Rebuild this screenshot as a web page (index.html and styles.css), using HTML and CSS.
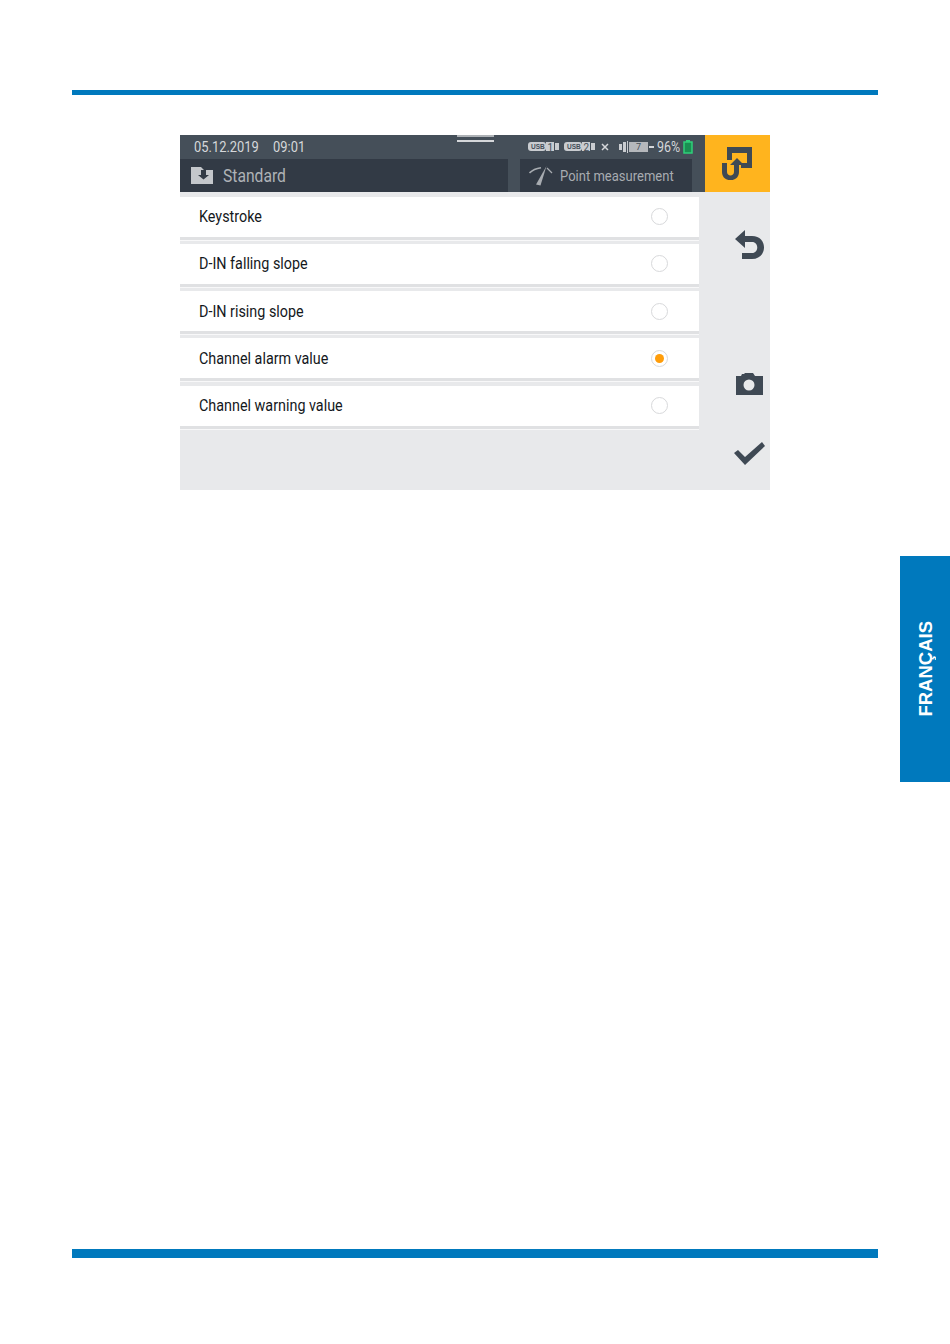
FILE: index.html
```html
<!DOCTYPE html>
<html lang="en">

<head>
    <meta charset="UTF-8">
    <meta name="viewport" content="width=device-width, initial-scale=1.0">
    <title>Trigger source</title>
    <link rel="stylesheet" href="styles.css">
</head>

<body>

    <div class="page">
        <div class="rule rule-top"></div>

        <div class="screen">
            <div class="topbar">
                <div class="topbar-main">
                    <div class="status">
                        <span class="datetime"><span>05.12.2019</span><span>09:01</span></span>
                        <span class="handle"></span>
                        <div class="tray">
                            <svg class="usb" width="32" height="12" viewBox="0 0 32 12">
                                <rect x="0" y="1" width="18" height="9" rx="3" fill="#c9ccd0"/>
                                <rect x="18" y="1" width="8" height="9" fill="#c9ccd0"/>
                                <rect x="27" y="2" width="4" height="7" fill="#c9ccd0"/>
                                <text x="3" y="8.200" class="usb-label">USB</text>
                                <text x="19.500" y="9.500" class="usb-num">1</text>
                            </svg>
                            <svg class="usb" width="32" height="12" viewBox="0 0 32 12">
                                <rect x="0" y="1" width="18" height="9" rx="3" fill="#c9ccd0"/>
                                <rect x="18" y="1" width="8" height="9" fill="#c9ccd0"/>
                                <rect x="27" y="2" width="4" height="7" fill="#c9ccd0"/>
                                <text x="3" y="8.200" class="usb-label">USB</text>
                                <text x="19.500" y="9.500" class="usb-num">2</text>
                            </svg>
                            <svg class="cross" width="8" height="8" viewBox="0 0 8 8">
                                <path d="M1 1L7 7M7 1L1 7" stroke="#d5d7da" stroke-width="1.500"/>
                            </svg>
                            <svg class="card" width="35" height="12" viewBox="0 0 35 12">
                                <rect x="0" y="3" width="3" height="6" fill="#c9ccd0"/>
                                <rect x="4" y="1" width="3" height="10" fill="#c9ccd0"/>
                                <rect x="8" y="0" width="1" height="12" fill="#c9ccd0"/>
                                <rect x="10" y="1" width="19" height="10" fill="#b5b8bc"/>
                                <rect x="30" y="5" width="5" height="2" fill="#d5d7da"/>
                                <text x="17" y="9.400" class="card-num">7</text>
                            </svg>
                            <span class="percent">96%</span>
                            <svg class="battery" width="10" height="14" viewBox="0 0 10 14">
                                <rect x="3" y="0" width="4" height="2" fill="#2fd07a"/>
                                <rect x="1" y="2" width="8" height="11" fill="#1a8f52" stroke="#2fd07a" stroke-width="1.500"/>
                            </svg>
                        </div>
                    </div>
                    <div class="subbar">
                        <div class="profile">
                            <svg class="folder" width="22" height="17" viewBox="0 0 22 17">
                                <path d="M0 0H10L13 3H22V17H0Z" fill="#c4c7cb"/>
                                <path d="M10 3H15V8H18L12.500 12.500L7 8H10Z" fill="#323a45"/>
                            </svg>
                            <span>Standard</span>
                        </div>
                        <div class="mode">
                            <svg class="gauge" width="24" height="21" viewBox="0 0 24 21">
                                <path d="M0.500 8C3 5.500 7 3.500 12 2.800" fill="none" stroke="#a8acb1" stroke-width="1.600"/>
                                <path d="M7 19.500L11.500 20.500L17.500 1Z" fill="#a8acb1"/>
                                <path d="M18 3L23 8" stroke="#a8acb1" stroke-width="1.200"/>
                            </svg>
                            <span>Point measurement</span>
                        </div>
                    </div>
                </div>
                <button class="switch-btn">
                    <svg width="31" height="33" viewBox="0 0 31 33">
                        <path d="M5 0H30V21H19V16H25V6H10V13H5Z" fill="#3f4954"/>
                        <path d="M0 16H5V25C5 29.500 12 29.500 12 25V18H8L15 11L22 18H17V25C17 36 0 36 0 25Z" fill="#3f4954"/>
                    </svg>
                </button>
            </div>

            <div class="content">
                <div class="options">
                    <div class="option">
                        <span class="option-label">Keystroke</span>
                        <span class="radio"></span>
                    </div>
                    <div class="option">
                        <span class="option-label">D-IN falling slope</span>
                        <span class="radio"></span>
                    </div>
                    <div class="option">
                        <span class="option-label">D-IN rising slope</span>
                        <span class="radio"></span>
                    </div>
                    <div class="option">
                        <span class="option-label">Channel alarm value</span>
                        <span class="radio checked"></span>
                    </div>
                    <div class="option">
                        <span class="option-label">Channel warning value</span>
                        <span class="radio"></span>
                    </div>
                </div>
                <div class="actions">
                    <svg class="icon-back" width="30" height="30" viewBox="0 0 30 30">
                        <path d="M10 0V6H17C33 6 33 29 17 29H7V23H17C24 23 24 12 17 12H10V18L0 9Z" fill="#3f4954"/>
                    </svg>
                    <svg class="icon-camera" width="27" height="22" viewBox="0 0 27 22">
                        <path fill-rule="evenodd" d="M0 3H5L6 1H8L9 0H17L19 3H27V22H0ZM13 6.500A5.500 5.500 0 1 0 13 17.500A5.500 5.500 0 1 0 13 6.500Z" fill="#3f4954"/>
                    </svg>
                    <svg class="icon-check" width="31" height="25" viewBox="0 0 31 25">
                        <path d="M0 12L4 9L11 16L28 1L31 5L11 24Z" fill="#3f4954"/>
                    </svg>
                </div>
            </div>
        </div>

        <div class="rule rule-bottom"></div>

        <div class="lang-tab"><span>FRANÇAIS</span></div>
    </div>

</body>

</html>
```

FILE: styles.css
```css
body {
    margin: 0;
    background-color: #fff;
    font-family: Roboto, "Liberation Sans", sans-serif;
}

.page {
    position: relative;
    width: 950px;
    height: 1344px;
    padding-top: 90px;
    box-sizing: border-box;
    overflow: hidden;
}

.rule {
    margin: 0 72px;
    background-color: #0079bd;
}

.rule-top {
    height: 5px;
}

.rule-bottom {
    height: 9px;
    margin-top: 759px;
}

.screen {
    width: 590px;
    height: 355px;
    margin: 40px 0 0 180px;
    background-color: #e8e9eb;
}

/* header */
.topbar {
    display: flex;
    height: 57px;
}

.topbar-main {
    flex-grow: 1;
    display: flex;
    flex-direction: column;
    background-color: #454f59;
}

.status {
    position: relative;
    display: flex;
    justify-content: space-between;
    align-items: center;
    height: 24px;
    padding: 0 12px 0 14px;
}

.datetime {
    display: flex;
    gap: 16px;
    font-size: 14.500px;
    color: #d5d7da;
    transform: scaleX(0.89);
    transform-origin: left center;
}

.handle {
    position: absolute;
    left: 277px;
    top: 0;
    width: 37px;
    height: 7px;
    box-sizing: border-box;
    border-top: 2px solid #aeb2b6;
    border-bottom: 2px solid #d5d7da;
}

.tray {
    display: flex;
    align-items: center;
    gap: 4px;
}

.usb-label {
    font-family: "Liberation Sans", sans-serif;
    font-size: 6.500px;
    font-weight: bold;
    fill: #454f59;
}

.usb-num {
    font-size: 10px;
    fill: #454f59;
}

.card-num {
    font-size: 9px;
    fill: #454f59;
}

.cross {
    margin: 0 1px 0 1px;
}

.card {
    margin-left: 5px;
}

.percent {
    font-size: 14.500px;
    color: #d5d7da;
    transform: scaleX(0.86);
    margin: 0 -3px;
}

.subbar {
    display: flex;
    justify-content: space-between;
    height: 33px;
}

.profile {
    display: flex;
    align-items: center;
    gap: 10px;
    width: 328px;
    padding-left: 11px;
    box-sizing: border-box;
    background-color: #323a45;
    font-size: 18px;
    color: #aeb2b6;
}

.profile span {
    transform: scaleX(0.87);
    transform-origin: left center;
}

.mode {
    display: flex;
    align-items: center;
    gap: 7px;
    width: 172px;
    margin-right: 13px;
    padding-left: 9px;
    box-sizing: border-box;
    background-color: #323a45;
    font-size: 14px;
    color: #a8acb1;
    white-space: nowrap;
}

.mode span {
    transform: scaleX(0.93);
    transform-origin: left center;
}

.switch-btn {
    flex-shrink: 0;
    display: flex;
    align-items: flex-start;
    width: 65px;
    padding: 12px 0 0 17px;
    border: none;
    background-color: #ffb41e;
}

/* list */
.content {
    display: flex;
    height: 298px;
}

.options {
    width: 519px;
    padding-top: 4.600px;
}

.option {
    display: flex;
    justify-content: space-between;
    align-items: center;
    height: 40px;
    padding: 0 31px 0 19px;
    background-color: #fff;
    margin-bottom: 7.250px;
    box-shadow: 0 3px 0 #e0e1e3, 0 4px 0 #f8f8f9;
}

.option-label {
    font-size: 16.500px;
    color: #14181c;
    transform: scaleX(0.87);
    transform-origin: left center;
    white-space: nowrap;
}

.radio {
    width: 15px;
    height: 15px;
    border: 1px solid #d8d9db;
    border-radius: 50%;
    display: flex;
    align-items: center;
    justify-content: center;
    background-color: #fff;
}

.radio.checked::after {
    content: "";
    width: 9px;
    height: 9px;
    border-radius: 50%;
    background-color: #ff9d0a;
}

/* right hand action column */
.actions {
    flex-grow: 1;
    display: flex;
    flex-direction: column;
    align-items: flex-start;
}

.icon-back {
    margin: 38px 0 0 36px;
}

.icon-camera {
    margin: 113px 0 0 37px;
}

.icon-check {
    margin: 46px 0 0 35px;
}

.lang-tab {
    position: absolute;
    right: 0;
    top: 556px;
    width: 50px;
    height: 226px;
    background-color: #0079bd;
    display: flex;
    align-items: center;
    justify-content: center;
}

.lang-tab span {
    writing-mode: vertical-rl;
    transform: rotate(180deg);
    font-family: "Liberation Sans", sans-serif;
    font-size: 18.500px;
    font-weight: bold;
    color: #fff;
    margin-left: 1px;
}
```
